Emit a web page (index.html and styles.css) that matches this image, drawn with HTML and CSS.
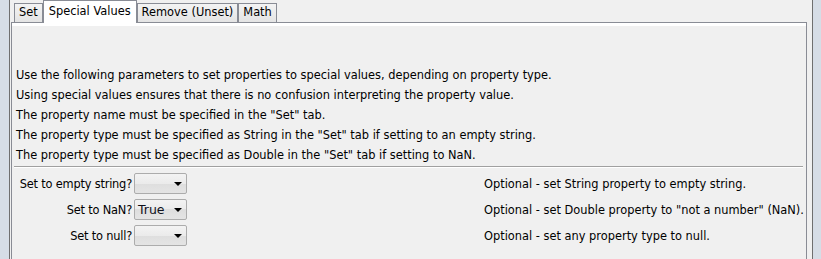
FILE: index.html
```html
<!doctype html>
<html lang="en">
<head>
    <meta charset="UTF-8">
    <title>Special Values</title>
    <link rel="stylesheet" href="styles.css">
</head>
<body>
    <div class="window">
        <div class="desk-left"></div>
        <div class="frame">
            <div class="tabpane">
                <div class="tabs">
                    <div class="tab">Set</div>
                    <div class="tab selected">Special Values</div>
                    <div class="tab">Remove (Unset)</div>
                    <div class="tab">Math</div>
                </div>
                <div class="content">
                    <div class="intro">
                        <p>Use the following parameters to set properties to special values, depending on property type.</p>
                        <p>Using special values ensures that there is no confusion interpreting the property value.</p>
                        <p>The property name must be specified in the "Set" tab.</p>
                        <p>The property type must be specified as String in the "Set" tab if setting to an empty string.</p>
                        <p>The property type must be specified as Double in the "Set" tab if setting to NaN.</p>
                    </div>
                    <div class="separator"></div>
                    <div class="params">
                        <label class="param-label">Set to empty string?</label>
                        <div class="combo"><span class="combo-value"></span><span class="arrow"></span></div>
                        <div class="param-desc">Optional - set String property to empty string.</div>

                        <label class="param-label">Set to NaN?</label>
                        <div class="combo"><span class="combo-value">True</span><span class="arrow"></span></div>
                        <div class="param-desc">Optional - set Double property to "not a number" (NaN).</div>

                        <label class="param-label">Set to null?</label>
                        <div class="combo"><span class="combo-value"></span><span class="arrow"></span></div>
                        <div class="param-desc">Optional - set any property type to null.</div>
                    </div>
                </div>
            </div>
        </div>
        <div class="desk-right"></div>
    </div>
</body>
</html>
```

FILE: styles.css
```css
body {
    margin: 0;
    width: 821px;
    height: 259px;
    overflow: hidden;
    background-color: #f0f0f0;
    font-family: 'DejaVu Sans', sans-serif;
    font-size: 11.4px;
    color: #000000;
}
.window {
    display: flex;
    height: 259px;
}
.desk-left {
    width: 9px;
    background-color: #d6dde6;
}
.frame {
    flex: 1;
    border-left: 1px solid #6f6f6f;
    border-right: 1px solid #6f6f6f;
    padding: 0 5px 0 1px;
}
.desk-right {
    width: 8px;
    background-color: #d6dde6;
}
.tabpane {
    display: flex;
    flex-direction: column;
    height: 100%;
}
.tabs {
    display: flex;
    align-items: flex-end;
    height: 22px;
    padding-left: 3px;
}
.tab {
    height: 18px;
    line-height: 17px;
    padding: 0 4px;
    border: 1px solid #898c95;
    border-bottom: none;
    background: linear-gradient(#f3f3f3, #e4e4e4);
}
.tab.selected {
    height: 22px;
    line-height: 21px;
    padding: 0 5px;
    background: #ffffff;
    margin-bottom: -1px;
    position: relative;
    z-index: 1;
}
.content {
    flex: 1;
    border: 1px solid #898c95;
    border-bottom: none;
    box-shadow: inset 0 3px 0 #ffffff;
    padding: 42px 0 0 4px;
}
.intro p {
    margin: 0;
    line-height: 20px;
}
.separator {
    margin: 1px 3px 0 -2px;
    border-top: 1px solid #a0a0a0;
    border-bottom: 1px solid #ffffff;
}
.params {
    display: grid;
    grid-template-columns: 116px 53px 1fr;
    column-gap: 2px;
    row-gap: 5px;
    align-items: center;
    margin-top: 5px;
}
.param-label {
    text-align: right;
    white-space: nowrap;
    letter-spacing: -0.2px;
    line-height: 19px;
    padding-top: 2px;
}
.param-desc {
    white-space: nowrap;
    line-height: 19px;
    padding: 2px 0 0 295px;
}
.combo {
    box-sizing: border-box;
    height: 21px;
    border: 1px solid #acacac;
    border-radius: 2px;
    background: linear-gradient(#f3f3f3, #ebebeb 50%, #dedede 50%, #e4e4e4);
    display: flex;
    align-items: center;
    padding: 0 4px 0 3px;
}
.combo-value {
    flex: 1;
    font-size: 12.5px;
    color: #10101a;
}
.arrow {
    width: 0;
    height: 0;
    border-left: 4px solid transparent;
    border-right: 4px solid transparent;
    border-top: 4px solid #000000;
}
```
